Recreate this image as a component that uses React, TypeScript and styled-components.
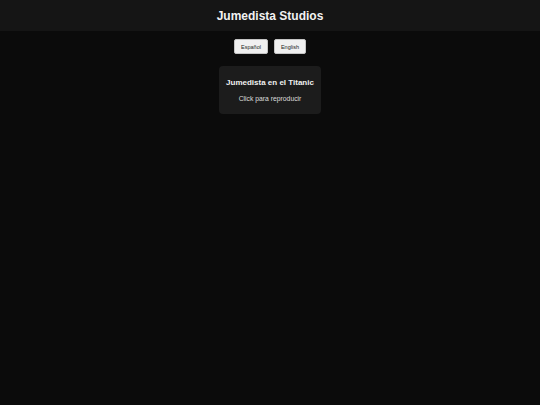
import React from 'react';
import styled, { createGlobalStyle } from 'styled-components';

const GlobalStyle = createGlobalStyle`
  html, body {
    margin: 0;
    padding: 0;
    background: #0b0b0b;
    font-family: "Liberation Sans", Arial, sans-serif;
    color: #ffffff;
  }
`;

export default function App() {
  return (
    <Page>
      <GlobalStyle />
      <Header>
        <Title>Jumedista Studios</Title>
      </Header>
      <LangBar>
        <LangButton>Español</LangButton>
        <LangButton>English</LangButton>
      </LangBar>
      <Card>
        <CardTitle>Jumedista en el Titanic</CardTitle>
        <CardText>Click para reproducir</CardText>
      </Card>
    </Page>
  );
}

const Page = styled.div`
  min-height: 405px;
  display: flex;
  flex-direction: column;
  align-items: center;
`;

const Header = styled.header`
  width: 100%;
  height: 31px;
  background: #151515;
  display: flex;
  align-items: center;
  justify-content: center;
`;

const Title = styled.h1`
  margin: 0;
  font-size: 12px;
  font-weight: 700;
  color: #f2f2f2;
`;

const LangBar = styled.div`
  display: flex;
  gap: 6px;
  margin-top: 8px;
`;

const LangButton = styled.button`
  height: 15px;
  padding: 0 6px;
  border: 1px solid #c4c4c4;
  border-radius: 2px;
  background: #f0f0f0;
  color: #222222;
  font-family: "Liberation Sans", Arial, sans-serif;
  font-size: 5.5px;
  cursor: pointer;
`;

const Card = styled.div`
  margin-top: 12px;
  width: 102px;
  height: 48px;
  box-sizing: border-box;
  background: #1c1c1c;
  border-radius: 4px;
  display: flex;
  flex-direction: column;
  align-items: center;
  padding-top: 12px;
  gap: 8px;
`;

const CardTitle = styled.div`
  font-size: 8px;
  font-weight: 700;
  color: #f0f0f0;
`;

const CardText = styled.div`
  font-size: 6.8px;
  color: #dddddd;
`;
